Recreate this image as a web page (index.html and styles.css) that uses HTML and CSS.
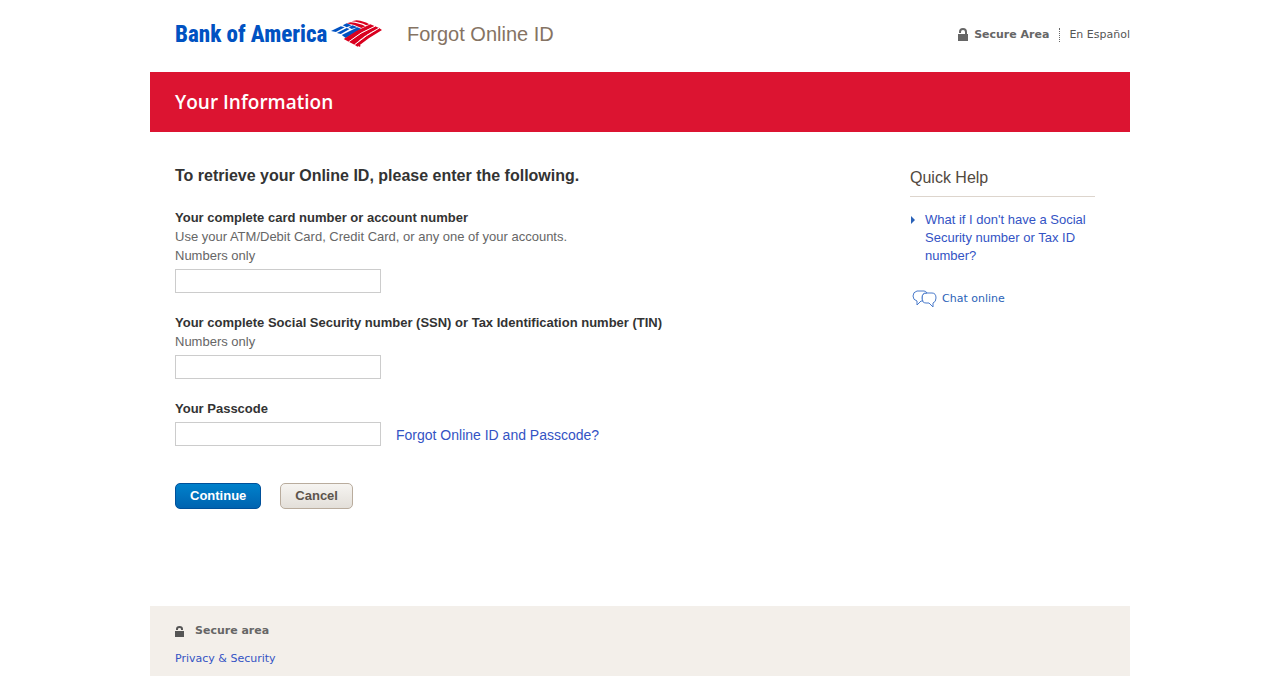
FILE: index.html
```html
<!DOCTYPE html>
<html lang="en">

<head>
    <meta charset="UTF-8">
    <meta name="viewport" content="width=device-width, initial-scale=1.0">
    <title>Forgot Online ID</title>
    <link rel="stylesheet" href="styles.css">
</head>

<body>
    <div class="page">
        <header class="header">
            <a class="logo" href="#">
                <span class="logo-text">Bank of America</span>
                <svg class="logo-flag" width="51" height="28" viewBox="0 0 52 28" aria-hidden="true">
                    <g fill="#0052c2">
                        <path d="M0 11 L10 6 L14 7 L5 12Z" />
                        <path d="M12 5 L16 3 L21 5 L16 7Z" />
                        <path d="M6 13 L16 8 L19 9 L10 14Z" />
                        <path d="M18 7 L22 5 L27 7 L21 9Z" />
                        <path d="M11 15 L27 7 L31 9 L15 18Z" />
                    </g>
                    <g fill="#d9001f">
                        <path d="M16 3 L20 2 Q29 3 35 6 L31 8 Q24 4 16 3Z" />
                        <path d="M21 1 L26 0 Q34 1 39 4 L36 5 Q30 2 21 1Z" />
                        <path d="M13 19 Q26 10 40 4 L45 6 Q30 12 18 22Z" />
                        <path d="M18 22 Q31 12 45 6 L49 8 Q34 15 24 25Z" />
                        <path d="M24 25 Q36 15 49 8 L52 10 Q38 18 27 27Z" />
                        <circle cx="29" cy="26" r="1" />
                    </g>
                    <path d="M18 22 Q30 12 45 6 M24 25 Q36 15 49 8" fill="none" stroke="#fff" />
                </svg>
            </a>
            <h1 class="page-title">Forgot Online ID</h1>
            <div class="header-links">
                <span class="secure">
                    <svg width="10" height="13" viewBox="0 0 10 13" aria-hidden="true">
                        <path d="M2 5V4a3 3 0 0 1 6 0v2" fill="none" stroke="#666" stroke-width="2" />
                        <rect y="6" width="10" height="7" fill="#666" />
                    </svg>
                    Secure Area
                </span>
                <a class="language" href="#">En Español</a>
            </div>
        </header>

        <h2 class="banner">Your Information</h2>

        <div class="content">
            <main class="main">
                <h3>To retrieve your Online ID, please enter the following.</h3>
                <form>
                    <div class="field">
                        <label for="card">Your complete card number or account number</label>
                        <p>Use your ATM/Debit Card, Credit Card, or any one of your accounts.</p>
                        <p>Numbers only</p>
                        <input type="text" id="card">
                    </div>
                    <div class="field">
                        <label for="ssn">Your complete Social Security number (SSN) or Tax Identification number (TIN)</label>
                        <p>Numbers only</p>
                        <input type="text" id="ssn">
                    </div>
                    <div class="field">
                        <label for="passcode">Your Passcode</label>
                        <div class="field-row">
                            <input type="password" id="passcode">
                            <a href="#">Forgot Online ID and Passcode?</a>
                        </div>
                    </div>
                    <div class="buttons">
                        <button type="button" class="btn btn-blue">Continue</button>
                        <button type="button" class="btn">Cancel</button>
                    </div>
                </form>
            </main>

            <aside class="help">
                <h3>Quick Help</h3>
                <ul>
                    <li><a href="#">What if I don't have a Social Security number or Tax ID number?</a></li>
                </ul>
                <a class="chat" href="#">
                    <svg width="25" height="18" viewBox="0 0 25 18" fill="#fff" stroke="#4a7bcb" aria-hidden="true">
                        <path d="M14 3h6q4 0 4 5 0 4-3 5v4l-4-4h-3q-4 0-4-5t4-5Z" />
                        <path d="M10 11H9l-4 4v-4Q1 10 1 6t4-5h7q2 0 3 2h-1q-4 0-4 5 0 2 1 3Z" />
                    </svg>
                    Chat online
                </a>
            </aside>
        </div>

        <footer class="footer">
            <p class="secure">
                <svg width="9" height="11" viewBox="0 0 9 11" aria-hidden="true">
                    <rect y="5" width="9" height="6" fill="#555" />
                    <path d="M2 4V3q0-2 2.500-2T7 3v1" fill="none" stroke="#555" stroke-width="2" />
                </svg>
                Secure area
            </p>
            <a href="#">Privacy &amp; Security</a>
        </footer>
    </div>
</body>

</html>
```
FILE: styles.css
```css
* {
    box-sizing: border-box;
}

body {
    margin: 0;
    background: #fff;
    font-family: "Liberation Sans", Arial, sans-serif;
    font-size: 13px;
    line-height: 19px;
    color: #666;
}

h1,
h2,
h3,
p,
ul {
    margin: 0;
    padding: 0;
}

a {
    color: #3353c4;
    text-decoration: none;
}

.page {
    max-width: 980px;
    min-height: 100vh;
    margin: 0 auto;
    display: flex;
    flex-direction: column;
}

/* header */
.header {
    display: flex;
    align-items: center;
    height: 72px;
    padding: 0 0 4px 25px;
}

.logo {
    display: flex;
    align-items: center;
    gap: 4px;
    margin-right: 25px;
}

.logo-text {
    width: 152px;
    padding-top: 2px;
    font-family: "Roboto Condensed", Roboto, "Liberation Sans", sans-serif;
    font-size: 23px;
    line-height: 28px;
    font-weight: 800;
    color: #0052c2;
    white-space: nowrap;
}

.page-title {
    font-size: 20px;
    line-height: 28px;
    font-weight: normal;
    color: #857363;
}

.header-links {
    display: flex;
    align-items: center;
    margin-left: auto;
    padding-top: 2px;
    font-family: "DejaVu Sans", Verdana, sans-serif;
    font-size: 11px;
    line-height: 14px;
}

.secure {
    display: flex;
    align-items: center;
    gap: 6px;
    font-weight: bold;
    color: #666;
}

.header .secure svg {
    margin-bottom: 2px;
}

.language {
    margin-left: 10px;
    padding-left: 9px;
    border-left: 1px dotted #666;
    color: #555;
}

.banner {
    padding: 16px 25px;
    background: #dc1431;
    color: #fff;
    font-family: "Open Sans", "Noto Sans", sans-serif;
    font-size: 19px;
    line-height: 28px;
    font-weight: 600;
}

/* form and help column */
.content {
    display: flex;
    justify-content: space-between;
    padding: 34px 35px 97px 25px;
}

.main h3 {
    margin-bottom: 22px;
    font-size: 16px;
    line-height: 20px;
    color: #333;
}

.field {
    margin-bottom: 20px;
}

.field label {
    display: block;
    font-weight: bold;
    color: #333;
}

.field input {
    display: block;
    width: 206px;
    height: 24px;
    margin-top: 4px;
    padding: 0 4px;
    border: 1px solid #ccc;
    background: #fff;
}

.field-row {
    display: flex;
    align-items: center;
    gap: 15px;
}

.field-row a {
    margin-top: 6px;
    font-size: 14px;
}

.buttons {
    display: flex;
    gap: 19px;
    margin-top: 37px;
}

.btn {
    height: 26px;
    padding: 0 14px 1px;
    border: 1px solid #b9ac9d;
    border-radius: 5px;
    background: linear-gradient(#f6f4f1, #e3dfd9);
    color: #5c544c;
    font-family: inherit;
    font-size: 13px;
    font-weight: bold;
}

.btn-blue {
    border-color: #00509a;
    background: linear-gradient(#0081cb, #0063b0);
    color: #fff;
}

.help {
    width: 185px;
}

.help h3 {
    padding: 1px 0 7px;
    border-bottom: 1px solid #ddd5cd;
    font-size: 16px;
    line-height: 22px;
    font-weight: normal;
    color: #524940;
}

.help ul {
    list-style: none;
    margin: 14px 0 24px;
}

.help li {
    position: relative;
    padding-left: 15px;
    line-height: 18px;
}

.help li::before {
    content: "";
    position: absolute;
    left: 1px;
    top: 5px;
    border: 4px solid transparent;
    border-left-color: #2a62b8;
    border-right: 0;
}

.chat {
    display: flex;
    align-items: center;
    gap: 5px;
    padding-left: 2px;
    font-family: "DejaVu Sans", Verdana, sans-serif;
    font-size: 11px;
    color: #2a62b8;
}

.footer {
    flex: 1;
    padding: 18px 25px 9px;
    background: #f3efea;
    font-family: "DejaVu Sans", Verdana, sans-serif;
    font-size: 11px;
    line-height: 14px;
}

.footer .secure {
    gap: 11px;
    margin-bottom: 14px;
}
```
